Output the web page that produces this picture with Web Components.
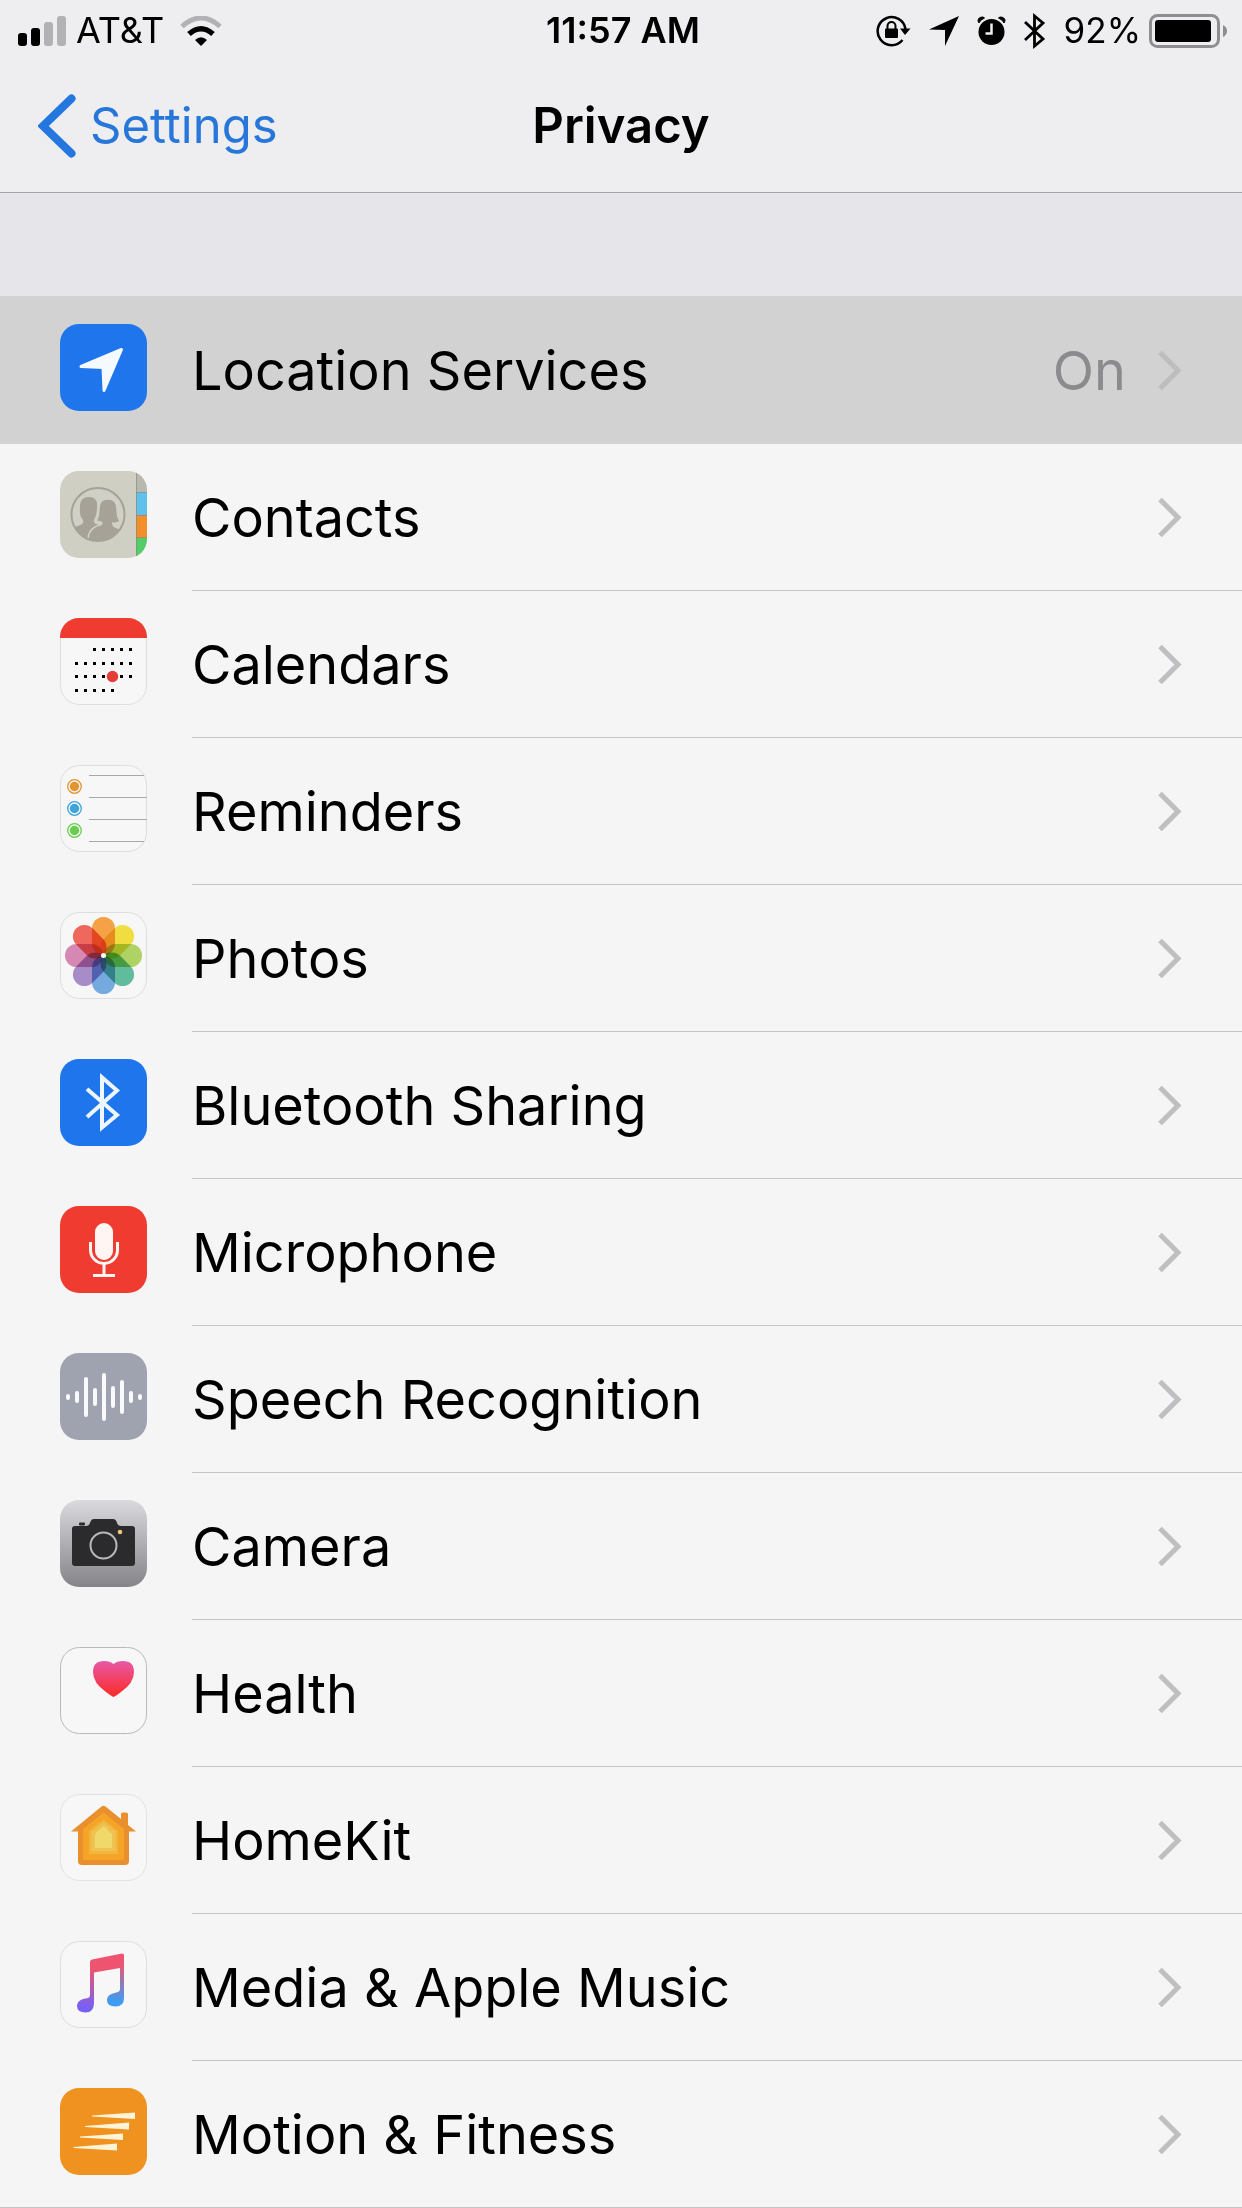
<!DOCTYPE html>
<html lang="en">
<head>
<meta charset="utf-8">
<meta name="viewport" content="width=device-width, initial-scale=1">
<title>Privacy</title>
<style>
  body {
    margin: 0;
    background: #e5e5ea;
    color: #000;
    font-family: Inter, "Liberation Sans", sans-serif;
  }
</style>
</head>
<body>

<status-bar carrier="AT&amp;T" time="11:57 AM" battery="92%"></status-bar>
<nav-bar back="Settings">Privacy</nav-bar>

<settings-list>
  <settings-row active><app-icon slot="icon" name="location"></app-icon>Location Services<span slot="value">On</span></settings-row>
  <settings-row><app-icon slot="icon" name="contacts"></app-icon>Contacts</settings-row>
  <settings-row><app-icon slot="icon" name="calendars"></app-icon>Calendars</settings-row>
  <settings-row><app-icon slot="icon" name="reminders"></app-icon>Reminders</settings-row>
  <settings-row><app-icon slot="icon" name="photos"></app-icon>Photos</settings-row>
  <settings-row><app-icon slot="icon" name="bluetooth"></app-icon>Bluetooth Sharing</settings-row>
  <settings-row><app-icon slot="icon" name="microphone"></app-icon>Microphone</settings-row>
  <settings-row><app-icon slot="icon" name="speech"></app-icon>Speech Recognition</settings-row>
  <settings-row><app-icon slot="icon" name="camera"></app-icon>Camera</settings-row>
  <settings-row><app-icon slot="icon" name="health"></app-icon>Health</settings-row>
  <settings-row><app-icon slot="icon" name="homekit"></app-icon>HomeKit</settings-row>
  <settings-row><app-icon slot="icon" name="music"></app-icon>Media &amp; Apple Music</settings-row>
  <settings-row last><app-icon slot="icon" name="motion"></app-icon>Motion &amp; Fitness</settings-row>
</settings-list>

<script>
class StatusBar extends HTMLElement {
  connectedCallback() {
    const shadowRoot = this.attachShadow({ mode: "open" });

    shadowRoot.innerHTML = `
      <style>
        :host {
          display: grid;
          grid-template-columns: 1fr auto 1fr;
          align-items: center;
          padding: 0 14px 2px 18px;
          background: #eeeef0;
          font-size: 36px;
          line-height: 61px;
        }
        svg {
          display: block;
        }
        .left, .right {
          display: flex;
          align-items: center;
        }
        .left {
          gap: 10px;
        }
        .wifi {
          margin-left: 6px;
        }
        .time {
          font-weight: 600;
        }
        .right {
          justify-content: flex-end;
          gap: 18px;
        }
        .power {
          display: flex;
          align-items: center;
          gap: 8px;
          font-size: 35px;
        }
      </style>

      <div class="left">
        <svg width="48" height="30" viewBox="0 0 48 30">
          <rect x="0" y="17" width="9" height="13" rx="3"/>
          <rect x="13" y="12" width="9" height="18" rx="3"/>
          <rect x="26" y="6" width="9" height="24" rx="3" fill="#b2b2b4"/>
          <rect x="39" y="0" width="9" height="30" rx="3" fill="#b2b2b4"/>
        </svg>
        <span class="carrier"></span>
        <svg class="wifi" width="42" height="30" viewBox="0 0 42 30">
          <path d="M2 10.5Q21-6.5 40 10.5" fill="none" stroke="#b2b2b4" stroke-width="5"/>
          <path d="M9 18Q21 7.5 33 18" fill="none" stroke="#000" stroke-width="5.5"/>
          <path d="M15 24Q21 18.5 27 24L21 30Z"/>
        </svg>
      </div>
      <div class="time"></div>
      <div class="right">
        <svg width="35" height="32" viewBox="0 0 35 32">
          <path d="M26.5 25A14 14 0 1 1 29.5 14" fill="none" stroke="#000" stroke-width="2.5"/>
          <path d="M24 13.5H34.5L29 20Z"/>
          <rect x="9" y="13.5" width="13" height="9.5" rx="1"/>
          <path d="M11.5 14V11A4 4 0 0 1 19.5 11V14" fill="none" stroke="#000" stroke-width="2"/>
        </svg>
        <svg width="30" height="30" viewBox="0 0 30 30">
          <path d="M0 13.5L30 0L16 30V14Z"/>
        </svg>
        <svg width="29" height="30" viewBox="0 0 29 30">
          <circle cx="14.5" cy="16" r="13"/>
          <path d="M1 5Q1 1 6 1L7.5 2Q3 4 2 7ZM28 5Q28 1 23 1L21.5 2Q26 4 27 7Z" stroke="#000"/>
          <path d="M14.5 7.5V17.5H8.5" fill="none" stroke="#eeeef0" stroke-width="2.5"/>
        </svg>
        <svg width="22" height="36" viewBox="0 0 22 36">
          <path d="M1 9L19 26L10.5 33V3L19 10L1 27" fill="none" stroke="#000" stroke-width="2.8"/>
        </svg>
        <div class="power">
          <span class="battery"></span>
          <svg width="79" height="34" viewBox="0 0 79 34">
            <rect x="1.5" y="1.5" width="68" height="31" rx="7" fill="none" stroke="#8e8e91" stroke-width="3"/>
            <rect x="6" y="6" width="56" height="22" rx="3"/>
            <path d="M74 11Q78 13 78 17T74 23Z" fill="#8e8e91"/>
          </svg>
        </div>
      </div>
    `;

    shadowRoot.querySelector(".carrier").textContent = this.getAttribute("carrier");
    shadowRoot.querySelector(".time").textContent = this.getAttribute("time");
    shadowRoot.querySelector(".battery").textContent = this.getAttribute("battery");
  }
}

class NavBar extends HTMLElement {
  connectedCallback() {
    const shadowRoot = this.attachShadow({ mode: "open" });

    shadowRoot.innerHTML = `
      <style>
        :host {
          display: grid;
          grid-template-columns: 1fr auto 1fr;
          align-items: center;
          padding: 0 38px 3px;
          border-bottom: 1px solid #a5a5a9;
          background: #eeeef0;
          font-size: 49px;
          line-height: 126px;
        }
        a {
          display: flex;
          align-items: center;
          gap: 14px;
          color: #2677d9;
          text-decoration: none;
        }
        h1 {
          margin: 0;
          font-size: 49px;
          font-weight: 600;
        }
      </style>

      <a href="#settings">
        <svg width="38" height="64" viewBox="0 0 38 64">
          <path d="M33.5 4.5L5 32L33.5 59.5" fill="none" stroke="#2577e0" stroke-width="8" stroke-linecap="round"/>
        </svg>
        <span></span>
      </a>
      <h1><slot></slot></h1>
    `;

    shadowRoot.querySelector("span").textContent = this.getAttribute("back");
  }
}

class SettingsList extends HTMLElement {
  connectedCallback() {
    this.attachShadow({ mode: "open" }).innerHTML = `
      <style>
        :host {
          display: block;
          margin-top: 103px;
          border-top: 1px solid #d2d2d2;
          background: #f5f5f5;
        }
      </style>
      <div role="list"><slot></slot></div>
    `;
  }
}

class SettingsRow extends HTMLElement {
  connectedCallback() {
    this.setAttribute("role", "listitem");

    this.attachShadow({ mode: "open" }).innerHTML = `
      <style>
        :host {
          display: block;
          font-size: 54px;
        }
        a {
          display: flex;
          gap: 45px;
          padding-left: 60px;
          color: inherit;
          text-decoration: none;
        }
        slot[name="icon"] {
          display: block;
          padding-top: 27px;
        }
        .body {
          flex: 1;
          display: flex;
          align-items: center;
          height: 146px;
          padding-right: 60px;
          border-bottom: 1px solid #c4c4c5;
        }
        .label {
          flex: 1;
        }
        .value {
          margin-right: 32px;
          color: #8b8b8e;
        }
        .chevron {
          stroke: #bfbfc1;
        }
        :host([active]) {
          background: #d2d2d2;
        }
        :host([active]) .body {
          border-color: #d2d2d2;
        }
        :host([active]) .chevron {
          stroke: #bdbdbf;
        }
        :host([last]) a {
          border-bottom: 1px solid #c4c4c5;
        }
        :host([last]) .body {
          border-bottom: 0;
        }
      </style>

      <a href="#">
        <slot name="icon"></slot>
        <div class="body">
          <span class="label"><slot></slot></span>
          <span class="value"><slot name="value"></slot></span>
          <svg class="chevron" width="24" height="40" viewBox="0 0 24 40">
            <path d="M2 2.5L20 20.5L2 38.5" fill="none" stroke-width="5"/>
          </svg>
        </div>
      </a>
    `;
  }
}

// all icons are drawn on an 87 x 87 grid
const tile = (fill) => `<rect width="87" height="87" rx="19" fill="${fill}"/>`;
const outline = (stroke) => `<rect x=".5" y=".5" width="86" height="86" rx="19" fill="#f7f7f7" stroke="${stroke}"/>`;

function calendarDots() {
  const rows = [[2, 6, 30], [0, 6, 44], [0, 6, 57], [0, 4, 71]];
  let dots = "";
  rows.forEach(([from, to, y]) => {
    for (let i = from; i <= to; i++) {
      dots += `<rect x="${15 + i * 9}" y="${y}" width="3" height="3"/>`;
    }
  });
  return dots;
}

function reminders() {
  const colors = ["#e0952f", "#3da5d9", "#6bcd4f"];
  return colors.map((color, i) => {
    const y = 21.5 + i * 22;
    return `<circle cx="14.5" cy="${y}" r="6.8" fill="none" stroke="${color}" stroke-width="1.3"/>
      <circle cx="14.5" cy="${y}" r="4.7" fill="${color}"/>`;
  }).join("") + `<path d="M29 10.5H84M29 32.5H87M29 54.5H87M29 76.5H84" stroke="#a9a9a9"/>`;
}

function petals() {
  const colors = ["#f59a36", "#f0dc32", "#a8cf58", "#55b796", "#6ba4dc", "#a184c4", "#d37fae", "#ee5c50"];
  return colors.map((color, i) =>
    `<rect x="32" y="5" width="23" height="38" rx="11.5" fill="${color}" transform="rotate(${i * 45} 43.5 43.5)" style="mix-blend-mode: multiply"/>`
  ).join("");
}

function soundBars() {
  const heights = [3, 6, 20, 9, 24, 11, 17, 6, 3];
  return heights.map((h, i) =>
    `<rect x="${6 + i * 9}" y="${44 - h}" width="4" height="${h * 2}" rx="2" fill="#fafafc"/>`
  ).join("");
}

const icons = {
  location: tile("#1e75ec") +
    `<path d="M21 42.5L61.5 25.5L44 66.5L43 43.5Z" fill="#f4faff" stroke="#f4faff" stroke-width="3" stroke-linejoin="round"/>`,

  contacts: `
    <clipPath id="clip"><rect width="87" height="87" rx="19"/></clipPath>
    <g clip-path="url(#clip)">
      <rect width="87" height="87" fill="#cfcfc4"/>
      <rect x="76" width="11" height="21" fill="#b9b8af"/>
      <rect x="76" y="21" width="11" height="23" fill="#5fc0ec"/>
      <rect x="76" y="44" width="11" height="23" fill="#f28e2b"/>
      <rect x="76" y="67" width="11" height="20" fill="#56cc68"/>
      <path d="M76.5 0V87M76 21.5H87M76 44.5H87M76 66.5H87" stroke="#85857a" stroke-opacity=".6"/>
    </g>
    <clipPath id="disc"><circle cx="38" cy="43.5" r="26"/></clipPath>
    <circle cx="38" cy="43.5" r="26" fill="#d1d0c7"/>
    <g clip-path="url(#disc)" fill="#a6a298">
      <path d="M11 60Q14 56 20 54Q24 53 23 49Q19 44 20 37Q19 26 29 26Q38 26 37 36Q37 44 34 49Q33 53 39 54L44 60V72H11Z"/>
      <path d="M28 72Q27 57 40 54Q43 53 41 51L36 50Q39 46 39 37Q39 28 48 28Q57 28 57 38Q57 46 60 50Q57 53 53 52Q52 55 58 57L66 61V72Z" stroke="#d1d0c7" stroke-width="1.5"/>
    </g>
    <circle cx="38" cy="43.5" r="26.5" fill="none" stroke="#a6a298" stroke-width="2"/>`,

  calendars: outline("#dedee0") +
    `<path d="M0 20V19A19 19 0 0 1 19 0H68A19 19 0 0 1 87 19V20Z" fill="#f03b30"/>` +
    calendarDots() +
    `<circle cx="52.5" cy="58.5" r="5.7" fill="#e43d38"/>`,

  reminders: outline("#dedee0") + reminders(),

  photos: outline("#e0dde0") +
    `<g style="isolation: isolate" opacity=".92">${petals()}</g>
    <circle cx="43.5" cy="43.5" r="2.5" fill="#fff"/>`,

  bluetooth: tile("#1e75ec") +
    `<path d="M27 30L57 56L42 68.5V18.5L57 31.5L27 58" fill="none" stroke="#eef7ff" stroke-width="4"/>`,

  microphone: tile("#f03c30") +
    `<rect x="35" y="17" width="18" height="37" rx="9" fill="#fff6f3"/>
    <path d="M30.5 36V44A13.5 13.5 0 0 0 57.5 44V36M44 58V70M33 69.5H55" fill="none" stroke="#fff6f3" stroke-width="3"/>`,

  speech: tile("#9fa2af") + soundBars(),

  camera: `
    <linearGradient id="steel" x2="0" y2="1">
      <stop offset="0" stop-color="#dadade"/>
      <stop offset="1" stop-color="#858489"/>
    </linearGradient>` + tile("url(#steel)") + `
    <rect x="19" y="22.5" width="6" height="3" rx="1" fill="#2b2b2d"/>
    <path d="M15 26H26Q29 26 30 23Q31 19 34 19H53Q56 19 57 23Q58 26 61 26H72Q75 26 75 29V63Q75 66 72 66H15Q12 66 12 63V29Q12 26 15 26Z" fill="#2b2b2d"/>
    <circle cx="43.5" cy="45.5" r="13" fill="none" stroke="#b9b9bd" stroke-width="2"/>
    <circle cx="60" cy="32" r="2.3" fill="#f2c57c"/>`,

  health: `
    <linearGradient id="pulse" x2="0" y2="1">
      <stop offset="0" stop-color="#e858a6"/>
      <stop offset="1" stop-color="#fb2b25"/>
    </linearGradient>` + outline("#b9b9bb") + `
    <path d="M53.5 50Q51 49 46 45Q33 36 33 25Q33 14 44 14Q50 14 53.5 17Q57 14 63 14Q74 14 74 25Q74 36 61 45Q56 49 53.5 50Z" fill="url(#pulse)"/>`,

  homekit: outline("#e2e2e4") + `
    <path d="M11 37.5L41.5 12.5Q43.5 11 45.5 12.5L61 25V20Q61 18.5 63 18.5H66Q68 18.5 68 20V31L76 37.5H69V67Q69 71 65 71H22Q18 71 18 67V37.5Z" fill="#e98f2d"/>
    <path d="M23 35L43.5 18.5L64 35V64Q64 66 62 66H25Q23 66 23 64Z" fill="#f6a428"/>
    <path d="M29 37L43.5 25.5L58 37V60H29Z" fill="#f2b63e"/>
    <path d="M31.5 38L43.5 28.5L55.5 38V57H31.5Z" fill="#eec352"/>
    <path d="M35 40L43.5 32L52 40V54H35Z" fill="#f0d86b"/>`,

  music: `
    <linearGradient id="warm" gradientUnits="userSpaceOnUse" x1="30" y1="18" x2="25" y2="65">
      <stop offset=".2" stop-color="#ee5470"/>
      <stop offset="1" stop-color="#7a60f2"/>
    </linearGradient>
    <linearGradient id="cool" gradientUnits="userSpaceOnUse" x1="62" y1="13" x2="58" y2="60">
      <stop offset=".2" stop-color="#ee5470"/>
      <stop offset="1" stop-color="#3f9cf2"/>
    </linearGradient>` + outline("#dedee0") + `
    <path d="M60 26L64 14V57Q64 65.5 55.5 65.5Q47 65.5 47 59Q47 54 53 52.5L58 51Q60 50.5 60 48Z" fill="url(#cool)"/>
    <path d="M34 31.5V62Q34 71.5 25.5 71.5Q17 71.5 17 65Q17 60 23 58L28 57Q30 56.5 30 54V21Q30 19 32 18.5L62 12.5Q64 12.5 64 14V26L60 27Z" fill="url(#warm)"/>
    <path d="M60 27V24H64V40H60Z" fill="url(#cool)"/>`,

  motion: tile("#ef921f") + `
    <path d="M32 27.5L75 24.5V31L32 28.5ZM25 38L69 34.5V41.5L25 39ZM20 48.5L63 45.5V52L20 49.5ZM13.5 59L57 55.5V62.5L13.5 60Z" fill="#fff3d8"/>`,
};

class AppIcon extends HTMLElement {
  connectedCallback() {
    this.attachShadow({ mode: "open" }).innerHTML = `
      <style>
        :host {
          display: block;
          width: 87px;
          height: 87px;
        }
        svg {
          display: block;
        }
      </style>
      <svg width="87" height="87" viewBox="0 0 87 87" aria-hidden="true">${icons[this.getAttribute("name")]}</svg>
    `;
  }
}

customElements.define("status-bar", StatusBar);
customElements.define("nav-bar", NavBar);
customElements.define("settings-list", SettingsList);
customElements.define("settings-row", SettingsRow);
customElements.define("app-icon", AppIcon);
</script>
</body>
</html>
